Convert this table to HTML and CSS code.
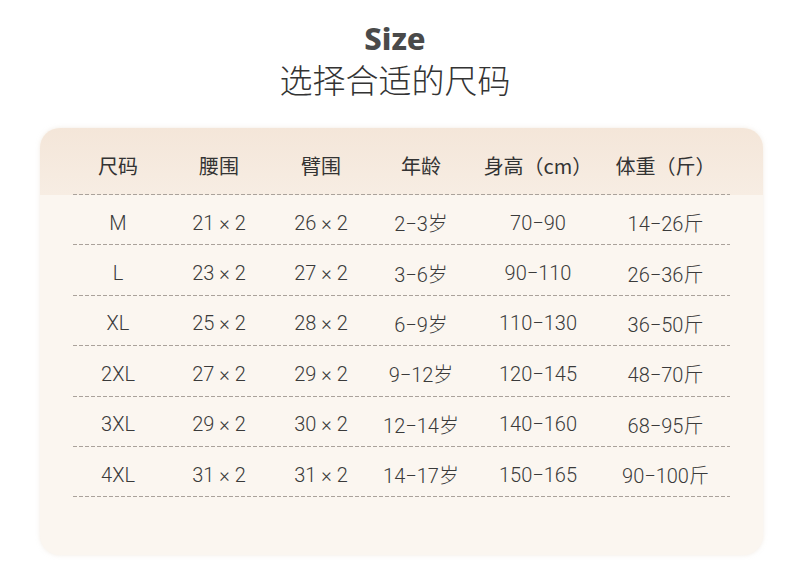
FILE: index.html
```html
<!DOCTYPE html>
<html lang="zh">
<head>
<meta charset="utf-8">
<link rel="stylesheet" href="styles.css">
</head>
<body>
<div class="page">
  <div class="titles">
    <div class="title-en">Size</div>
    <div class="title-zh">选择合适的尺码</div>
  </div>
  <div class="card">
    <div class="head">
      <div class="row hrow">
        <div>尺码</div><div>腰围</div><div>臂围</div><div>年龄</div><div>身高（cm）</div><div>体重（斤）</div>
      </div>
    </div>
    <div class="body">
      <div class="row"><div>M</div><div>21 × 2</div><div>26 × 2</div><div>2−3岁</div><div>70−90</div><div>14−26斤</div></div>
      <div class="row"><div>L</div><div>23 × 2</div><div>27 × 2</div><div>3−6岁</div><div>90−110</div><div>26−36斤</div></div>
      <div class="row"><div>XL</div><div>25 × 2</div><div>28 × 2</div><div>6−9岁</div><div>110−130</div><div>36−50斤</div></div>
      <div class="row"><div>2XL</div><div>27 × 2</div><div>29 × 2</div><div>9−12岁</div><div>120−145</div><div>48−70斤</div></div>
      <div class="row"><div>3XL</div><div>29 × 2</div><div>30 × 2</div><div>12−14岁</div><div>140−160</div><div>68−95斤</div></div>
      <div class="row"><div>4XL</div><div>31 × 2</div><div>31 × 2</div><div>14−17岁</div><div>150−165</div><div>90−100斤</div></div>
    </div>
  </div>
</div>
</body>
</html>
```

FILE: styles.css
```css
html, body {
  margin: 0;
  padding: 0;
  background: #ffffff;
}
.page {
  width: 790px;
  height: 588px;
  font-family: "Noto Sans CJK SC", "Noto Sans", sans-serif;
  color: #3a3a3a;
  overflow: hidden;
}
.titles {
  display: flex;
  flex-direction: column;
  align-items: center;
  padding-top: 17px;
}
.title-en {
  font-family: "Noto Sans", "Noto Sans CJK SC", sans-serif;
  font-weight: 800;
  font-size: 31px;
  line-height: 42px;
  color: #4a4a4a;
}
.title-zh {
  font-size: 33px;
  line-height: 40px;
  font-weight: 300;
  color: #333333;
}
.card {
  margin: 29px 27px 0 40px;
  height: 427px;
  border-radius: 20px;
  background: #fbf6f0;
  box-shadow: 0 0 4px rgba(230, 215, 200, 0.5);
  overflow: hidden;
}
.head {
  background: linear-gradient(#f4e6d9, #f7ede3);
  padding: 0 33px;
  height: 67px;
}
.body {
  padding: 0 33px;
}
.row {
  display: grid;
  grid-template-columns: 90px 112px 92px 108px 126px 129px;
  align-items: center;
  height: 50.4px;
  font-family: Roboto, "Noto Sans CJK SC", sans-serif;
  font-size: 20px;
  font-weight: 300;
  color: #3a3a3a;
  background-image: repeating-linear-gradient(90deg, #aaa29b 0 4px, transparent 4px 6px);
  background-size: 100% 1px;
  background-repeat: no-repeat;
  background-position: left bottom;
}
.row > div {
  text-align: center;
  white-space: nowrap;
  padding-top: 5px;
}
.hrow {
  height: 67px;
  padding-top: 8px;
  box-sizing: border-box;
  font-family: "Noto Sans CJK SC", sans-serif;
  font-size: 20px;
  font-weight: 400;
  color: #333333;
}
.hrow > div {
  padding-top: 0;
}
```
